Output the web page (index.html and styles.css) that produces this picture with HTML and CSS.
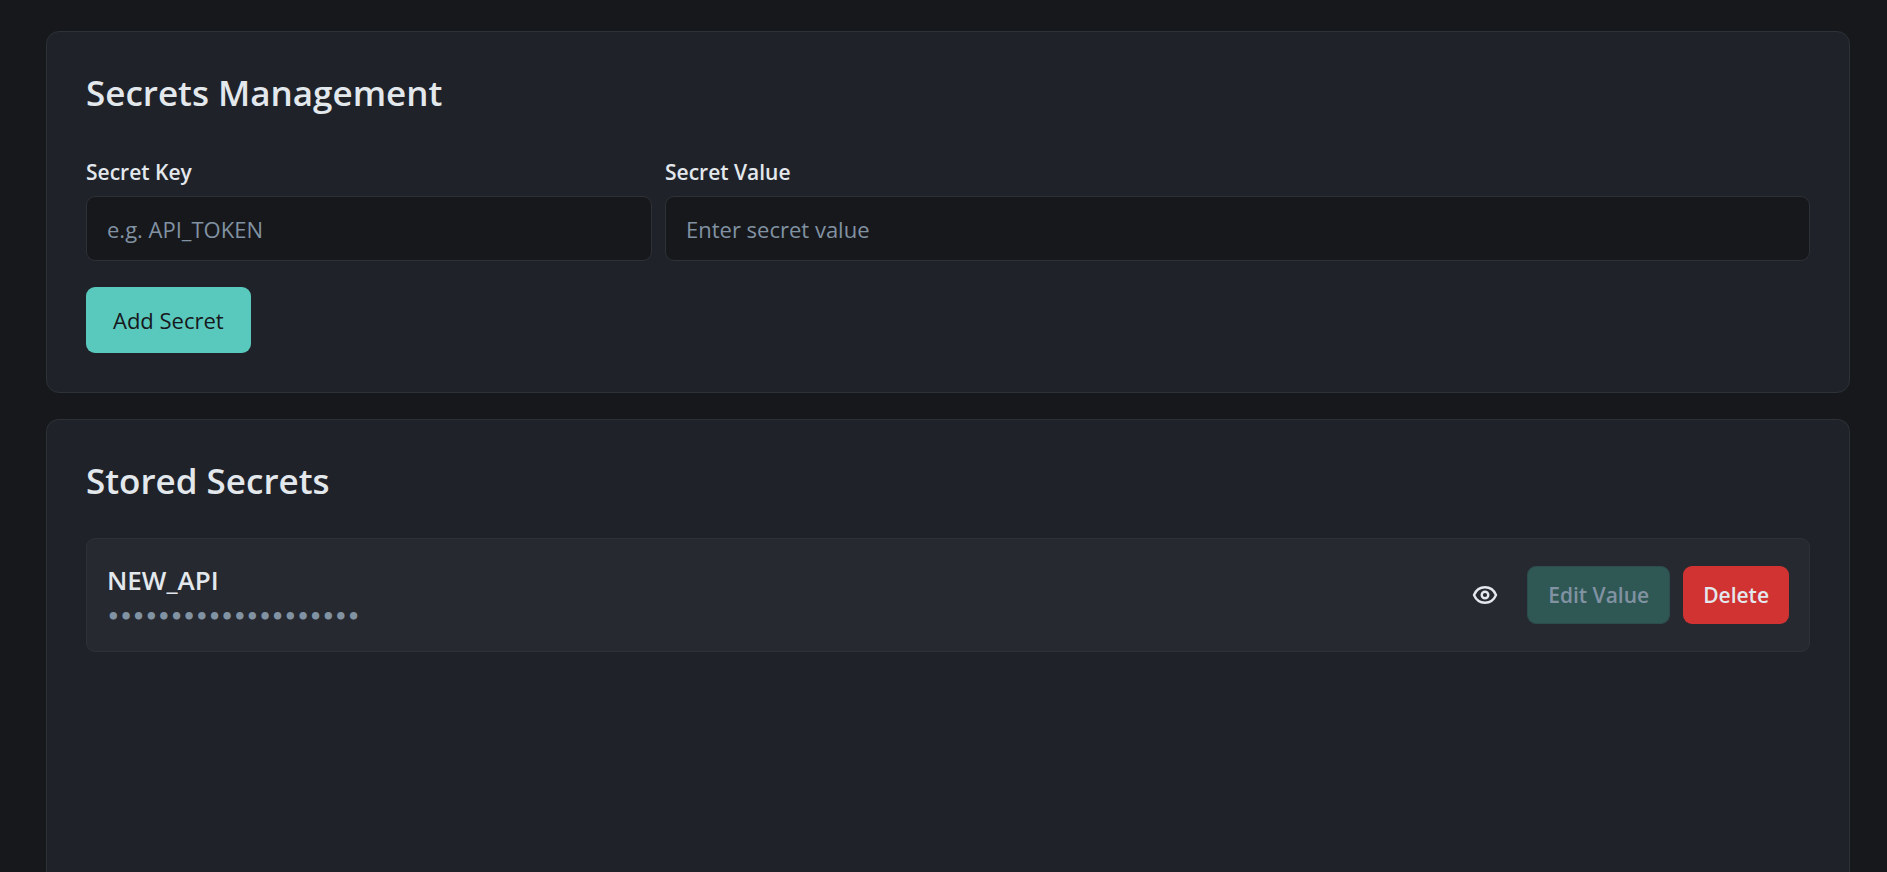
FILE: index.html
```html
<!DOCTYPE html>
<html lang="en">
<head>
  <meta charset="UTF-8" />
  <meta name="viewport" content="width=device-width, initial-scale=1.0"/>
  <title>Secrets Management</title>
  <link rel="stylesheet" href="styles.css">
</head>
<body>

  <main class="page">

    <section class="card">
      <h2>Secrets Management</h2>
      <form class="secret-form">
        <div class="form-grid">
          <div class="field">
            <label for="secretKey">Secret Key</label>
            <input type="text" id="secretKey" placeholder="e.g. API_TOKEN">
          </div>
          <div class="field field-wide">
            <label for="secretValue">Secret Value</label>
            <input type="password" id="secretValue" placeholder="Enter secret value">
          </div>
        </div>
        <button type="button" class="btn btn-primary">Add Secret</button>
      </form>
    </section>

    <section class="card card-list">
      <h2>Stored Secrets</h2>
      <div class="secret-item">
        <div class="secret-info">
          <div class="secret-name">NEW_API</div>
          <div class="secret-mask">••••••••••••••••••••</div>
        </div>
        <div class="secret-actions">
          <button type="button" class="btn-icon" aria-label="Show value">
            <svg viewBox="0 0 26 26" width="26" height="26" fill="none" stroke="currentColor" stroke-width="2.4" stroke-linecap="round" stroke-linejoin="round">
              <path d="M2 13C4 8.300 8 5.300 13 5.300S22 8.300 24 13C22 17.700 18 20.700 13 20.700S4 17.700 2 13Z"/>
              <circle cx="13" cy="13" r="3.300"/>
            </svg>
          </button>
          <button type="button" class="btn btn-edit" disabled>Edit Value</button>
          <button type="button" class="btn btn-delete">Delete</button>
        </div>
      </div>
    </section>

  </main>

</body>
</html>
```

FILE: styles.css
```css
* {
  box-sizing: border-box;
}

body {
  margin: 0;
  background: #17181c;
  color: #e3e8ed;
  font-family: 'Open Sans', 'Noto Sans', sans-serif;
  font-size: 22px;
  line-height: 32px;
}

.page {
  display: flex;
  flex-direction: column;
  gap: 26px;
  min-height: 100vh;
  padding: 31px 37px 0 46px;
}

.card {
  background: #1f2229;
  border: 1px solid #2d3138;
  border-radius: 13px;
  padding: 39px;
}

.card-list {
  flex: 1;
  border-bottom: none;
  border-radius: 13px 13px 0 0;
}

h2 {
  margin: 0 0 41px;
  font-size: 35px;
  font-weight: 600;
  line-height: 44px;
}

.card-list h2 {
  margin-bottom: 35px;
}

.form-grid {
  display: grid;
  grid-template-columns: repeat(3, 1fr);
  gap: 13px;
  margin-bottom: 26px;
}

.field {
  display: flex;
  flex-direction: column;
  gap: 8px;
}

.field-wide {
  grid-column: span 2;
}

label {
  font-size: 21px;
  font-weight: 600;
}

input {
  width: 100%;
  height: 65px;
  padding: 0 20px;
  background: #17181c;
  border: 1px solid #2d3138;
  border-radius: 9px;
  color: #e3e8ed;
  font-family: inherit;
  font-size: 22px;
}

input::placeholder {
  color: #8192a2;
  opacity: 1;
}

.btn {
  border: none;
  border-radius: 9px;
  font-family: inherit;
  font-size: 21px;
  font-weight: 600;
  line-height: 32px;
  cursor: pointer;
}

.btn-primary {
  display: block;
  padding: 17px 27px;
  background: #59c8bd;
  color: #17181c;
  font-size: 22px;
  font-weight: 500;
}

.secret-item {
  display: flex;
  justify-content: space-between;
  align-items: center;
  padding: 19px 20px;
  background: #262930;
  border: 1px solid #2d3138;
  border-radius: 9px;
  min-height: 114px;
}

.secret-name {
  font-size: 26px;
  font-weight: 600;
  line-height: 44px;
}

.secret-mask {
  color: #8192a2;
  font-family: 'DejaVu Sans Mono', monospace;
  font-size: 21px;
  font-weight: 700;
  line-height: 30px;
}

.secret-actions {
  display: flex;
  align-items: center;
  gap: 13px;
}

.btn-icon {
  display: flex;
  padding: 16px;
  background: none;
  border: none;
  color: #e3e8ed;
  cursor: pointer;
}

.btn-edit {
  padding: 12px 20px;
  background: #2f5855;
  border: 1px solid #2d4c4d;
  color: #8192a2;
}

.btn-delete {
  padding: 13px 20px;
  background: #d13232;
  color: #e3e8ed;
}
```
